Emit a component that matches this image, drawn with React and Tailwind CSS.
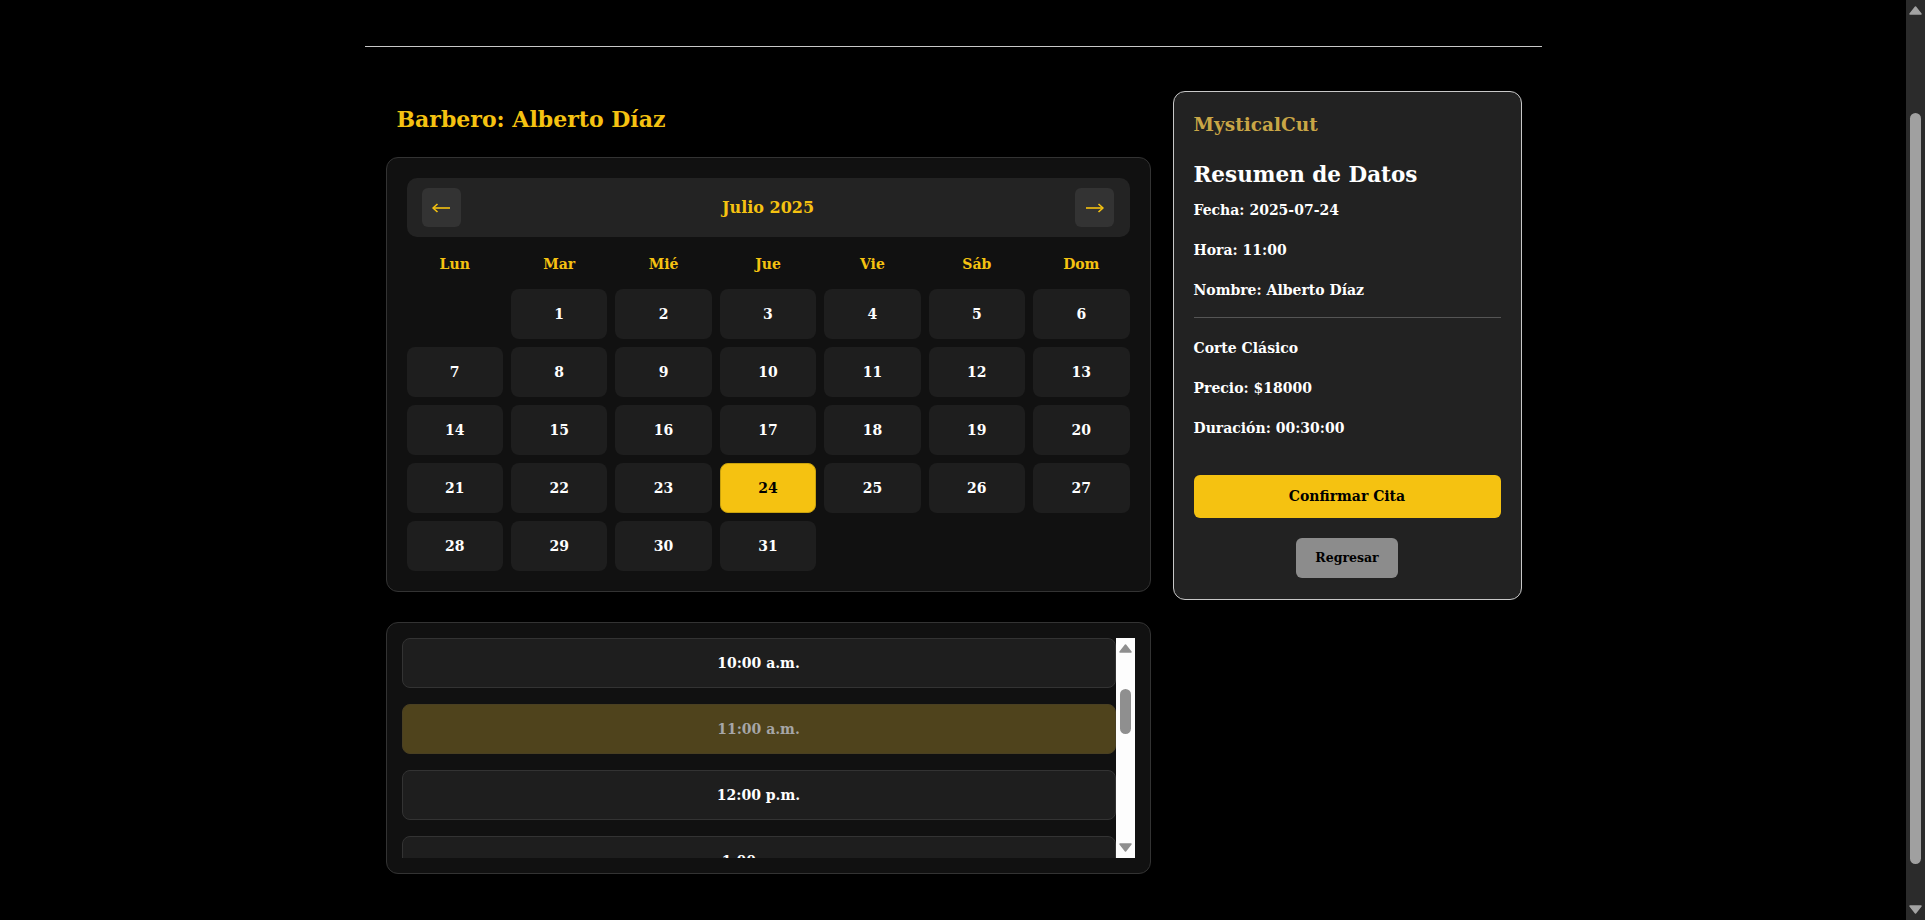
import { useLayoutEffect, useRef } from "react";

const DAY_NAMES = ["Lun", "Mar", "Mié", "Jue", "Vie", "Sáb", "Dom"];

const SLOTS = [
  "8:00 a.m.",
  "9:00 a.m.",
  "10:00 a.m.",
  "11:00 a.m.",
  "12:00 p.m.",
  "1:00 p.m.",
  "2:00 p.m.",
  "3:00 p.m.",
  "4:00 p.m.",
  "5:00 p.m.",
  "6:00 p.m.",
  "7:00 p.m.",
  "8:00 p.m.",
];

const SELECTED_DAY = 24;
const SELECTED_SLOT = "11:00 a.m.";

// julio 2025 empieza en martes
const cells = [null, ...Array.from({ length: 31 }, (_, i) => i + 1)];

function Triangle({ down, color, w, h, className }) {
  const pts = down ? `1,1 ${w - 1},1 ${w / 2},${h - 1}` : `1,${h - 1} ${w - 1},${h - 1} ${w / 2},1`;
  return (
    <svg width={w} height={h} viewBox={`0 0 ${w} ${h}`} className={className}>
      <polygon points={pts} fill={color} stroke={color} strokeWidth="1.5" strokeLinejoin="round" />
    </svg>
  );
}

function Arrow({ right }) {
  return (
    <svg width="20" height="12" viewBox="0 0 20 12" className={right ? "rotate-180" : ""}>
      <path d="M2 6h17" stroke="#f5c211" strokeWidth="1.6" fill="none" />
      <path d="M6.5 2L2 6l4.5 4" stroke="#f5c211" strokeWidth="1.6" fill="none" strokeLinejoin="round" />
    </svg>
  );
}

function Calendar() {
  return (
    <div className="rounded-xl border border-[#333] bg-[#111] p-5">
      <div className="flex h-[59px] items-center justify-between rounded-[10px] bg-[#232323] px-[15px]">
        <button className="flex h-[39px] w-[39px] items-center justify-center rounded-md bg-[#333]">
          <Arrow />
        </button>
        <span className="text-[16px] font-bold text-[#f5c211]">Julio 2025</span>
        <button className="flex h-[39px] w-[39px] items-center justify-center rounded-md bg-[#333]">
          <Arrow right />
        </button>
      </div>

      <div className="mt-[10px] grid grid-cols-7 gap-2">
        {DAY_NAMES.map((d) => (
          <div key={d} className="flex h-[34px] items-center justify-center text-[14px] font-bold text-[#f5c211]">
            {d}
          </div>
        ))}
        {cells.map((n, i) =>
          n === null ? (
            <div key={"e" + i} />
          ) : (
            <button
              key={n}
              className={
                n === SELECTED_DAY
                  ? "flex h-[50px] items-center justify-center rounded-lg border border-[#c9a20e] bg-[#f5c211] text-[14px] font-bold text-black"
                  : "flex h-[50px] items-center justify-center rounded-lg bg-[#1e1e1e] text-[14px] font-bold text-white"
              }
            >
              {n}
            </button>
          )
        )}
      </div>
    </div>
  );
}

function TimeSlots({ listRef }) {
  return (
    <div className="mt-[30px] rounded-xl border border-[#333] bg-[#111] p-[15px]">
      <div className="flex h-[220px]">
        <div ref={listRef} className="flex-1 overflow-hidden">
          {SLOTS.map((s) => (
            <div
              key={s}
              className={
                s === SELECTED_SLOT
                  ? "mb-4 flex h-[50px] items-center justify-center rounded-lg border border-[#4a4022] bg-[#4f431c] text-[14px] font-bold text-[#a6a6a6]"
                  : "mb-4 flex h-[50px] items-center justify-center rounded-lg border border-[#333] bg-[#1e1e1e] text-[14px] font-bold text-white"
              }
            >
              {s}
            </div>
          ))}
        </div>
        {/* barra de desplazamiento de la lista */}
        <div className="flex w-[19px] shrink-0 flex-col items-center bg-[#fdfdfd]">
          <Triangle color="#8f8f8f" w={13} h={9} className="mt-[6px]" />
          <div className="mt-[36px] h-[45px] w-[11px] rounded-full bg-[#8f8f8f]" />
          <div className="flex-1" />
          <Triangle down color="#8f8f8f" w={13} h={9} className="mb-[6px]" />
        </div>
      </div>
    </div>
  );
}

function Summary() {
  return (
    <aside className="w-[349px] shrink-0 self-start rounded-xl border border-[#c8c8c8] bg-[#222] px-5 pb-[21px] pt-[21px]">
      <h3 className="text-[18.5px] font-bold leading-[24px] text-[#c9a646]">MysticalCut</h3>
      <h2 className="mt-[24px] text-[21.5px] font-bold leading-[28px] text-white">Resumen de Datos</h2>
      <div className="mt-[11px] flex flex-col gap-[20px] text-[14px] font-bold leading-[20px] text-white">
        <p>Fecha: 2025-07-24</p>
        <p>Hora: 11:00</p>
        <p>Nombre: Alberto Díaz</p>
      </div>
      <div className="mb-[20px] mt-[17px] h-px bg-[#555]" />
      <div className="flex flex-col gap-[20px] text-[14px] font-bold leading-[20px] text-white">
        <p>Corte Clásico</p>
        <p>Precio: $18000</p>
        <p>Duración: 00:30:00</p>
      </div>
      <button className="mt-[37px] flex h-[43px] w-full items-center justify-center rounded-md bg-[#f5c211] text-[14px] font-bold text-black">
        Confirmar Cita
      </button>
      <div className="mt-5 flex justify-center">
        <button className="flex h-[40px] w-[102px] items-center justify-center rounded-md bg-[#8c8c8c] text-[12.5px] font-bold text-black">
          Regresar
        </button>
      </div>
    </aside>
  );
}

export default function App() {
  const pageRef = useRef(null);
  const listRef = useRef(null);

  useLayoutEffect(() => {
    if (pageRef.current) pageRef.current.scrollTop = 118;
    if (listRef.current) listRef.current.scrollTop = 132;
  }, []);

  return (
    <div className="flex h-screen bg-black font-['DejaVu_Serif',serif]">
      <div ref={pageRef} className="flex-1 overflow-hidden">
        <div className="mx-auto w-[1177px]">
          <header className="h-[165px] border-b border-[#c8c8c8]" />
          <main className="flex gap-[22px] pb-[96px] pl-[21px] pr-[20px] pt-[44px]">
            <section className="w-[765px] shrink-0">
              <h1 className="mb-[23px] mt-[13px] pl-[11px] text-[22px] font-bold leading-[30px] text-[#f5c211]">
                Barbero: Alberto Díaz
              </h1>
              <Calendar />
              <TimeSlots listRef={listRef} />
            </section>
            <Summary />
          </main>
        </div>
      </div>

      {/* barra de desplazamiento de la página */}
      <div className="flex w-[19px] shrink-0 flex-col items-center bg-[#2b2b2b]">
        <Triangle color="#a3a3a3" w={13} h={9} className="mt-[6px]" />
        <div className="mt-[98px] h-[751px] w-[11px] rounded-full bg-[#a0a0a0]" />
        <div className="flex-1" />
        <Triangle down color="#a3a3a3" w={13} h={9} className="mb-[6px]" />
      </div>
    </div>
  );
}
